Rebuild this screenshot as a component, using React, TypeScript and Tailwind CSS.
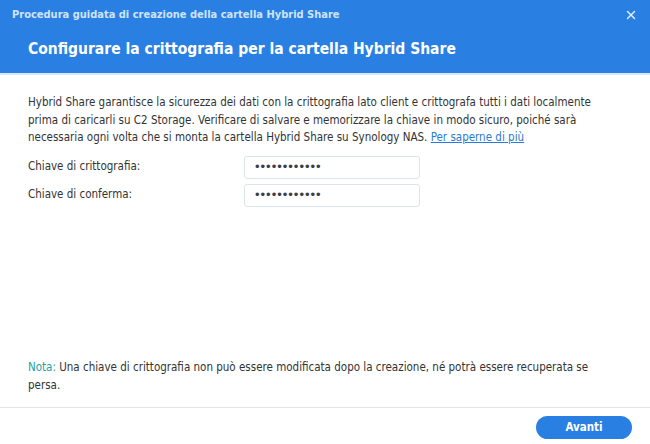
import {X} from 'lucide-react';

const font = {fontFamily: '"DejaVu Sans Condensed", Tahoma, "DejaVu Sans", sans-serif'};
const dots = {fontFamily: '"Liberation Sans", Arial, sans-serif'};

export default function App() {
    return (
        <div className="w-[650px] h-[444px] bg-white flex flex-col text-[#333] overflow-hidden" style={font}>
            {/* Header */}
            <div className="h-[73px] bg-[#2a80e2] flex flex-col px-3 shrink-0">
                <div className="flex items-center justify-between h-[30px]">
                    <span className="text-[11px] font-bold text-[#cfe4fb]">
                        Procedura guidata di creazione della cartella Hybrid Share
                    </span>
                    <X size={14} strokeWidth={2.5} className="text-[#e3efff]" />
                </div>
                <h1 className="pl-4 pt-[8px] text-[15.5px] font-bold text-white">
                    Configurare la crittografia per la cartella Hybrid Share
                </h1>
            </div>
            <div className="h-[2px] bg-[#d5e8fb] shrink-0" />

            {/* Content */}
            <div className="flex-1 flex flex-col px-7 pt-[19px]">
                <p className="text-[11.5px] leading-[17.5px]">
                    Hybrid Share garantisce la sicurezza dei dati con la crittografia lato client e crittografa tutti i dati localmente
                    prima di caricarli su C2 Storage. Verificare di salvare e memorizzare la chiave in modo sicuro, poiché sarà
                    necessaria ogni volta che si monta la cartella Hybrid Share su Synology NAS.{' '}
                    <a className="text-[#2a7ad8] underline">Per saperne di più</a>
                </p>

                <div className="mt-[9px] flex flex-col gap-[5px] text-[11.5px]">
                    <div className="flex items-center">
                        <label className="w-[216px]">Chiave di crittografia:</label>
                        <div className="w-[176px] h-[23px] border border-[#dde3ea] rounded-[3px] flex items-center px-[10px] text-[13px] tracking-[1px] text-[#3a3f4a]" style={dots}>
                            ••••••••••••
                        </div>
                    </div>
                    <div className="flex items-center">
                        <label className="w-[216px]">Chiave di conferma:</label>
                        <div className="w-[176px] h-[23px] border border-[#dde3ea] rounded-[3px] flex items-center px-[10px] text-[13px] tracking-[1px] text-[#3a3f4a]" style={dots}>
                            ••••••••••••
                        </div>
                    </div>
                </div>

                <p className="mt-auto mb-[13px] text-[11.5px] leading-[17.5px]">
                    <span className="text-[#23a0a8]">Nota:</span> Una chiave di crittografia non può essere modificata dopo la creazione, né potrà essere recuperata se
                    persa.
                </p>
            </div>

            {/* Footer */}
            <div className="h-[37px] border-t border-[#e3e6ea] flex items-start justify-end pr-[18px] pt-[8px] shrink-0">
                <button className="w-[96px] h-[23px] rounded-full bg-[#2a80e2] text-white text-[11.5px] font-bold">
                    Avanti
                </button>
            </div>
        </div>
    );
}
